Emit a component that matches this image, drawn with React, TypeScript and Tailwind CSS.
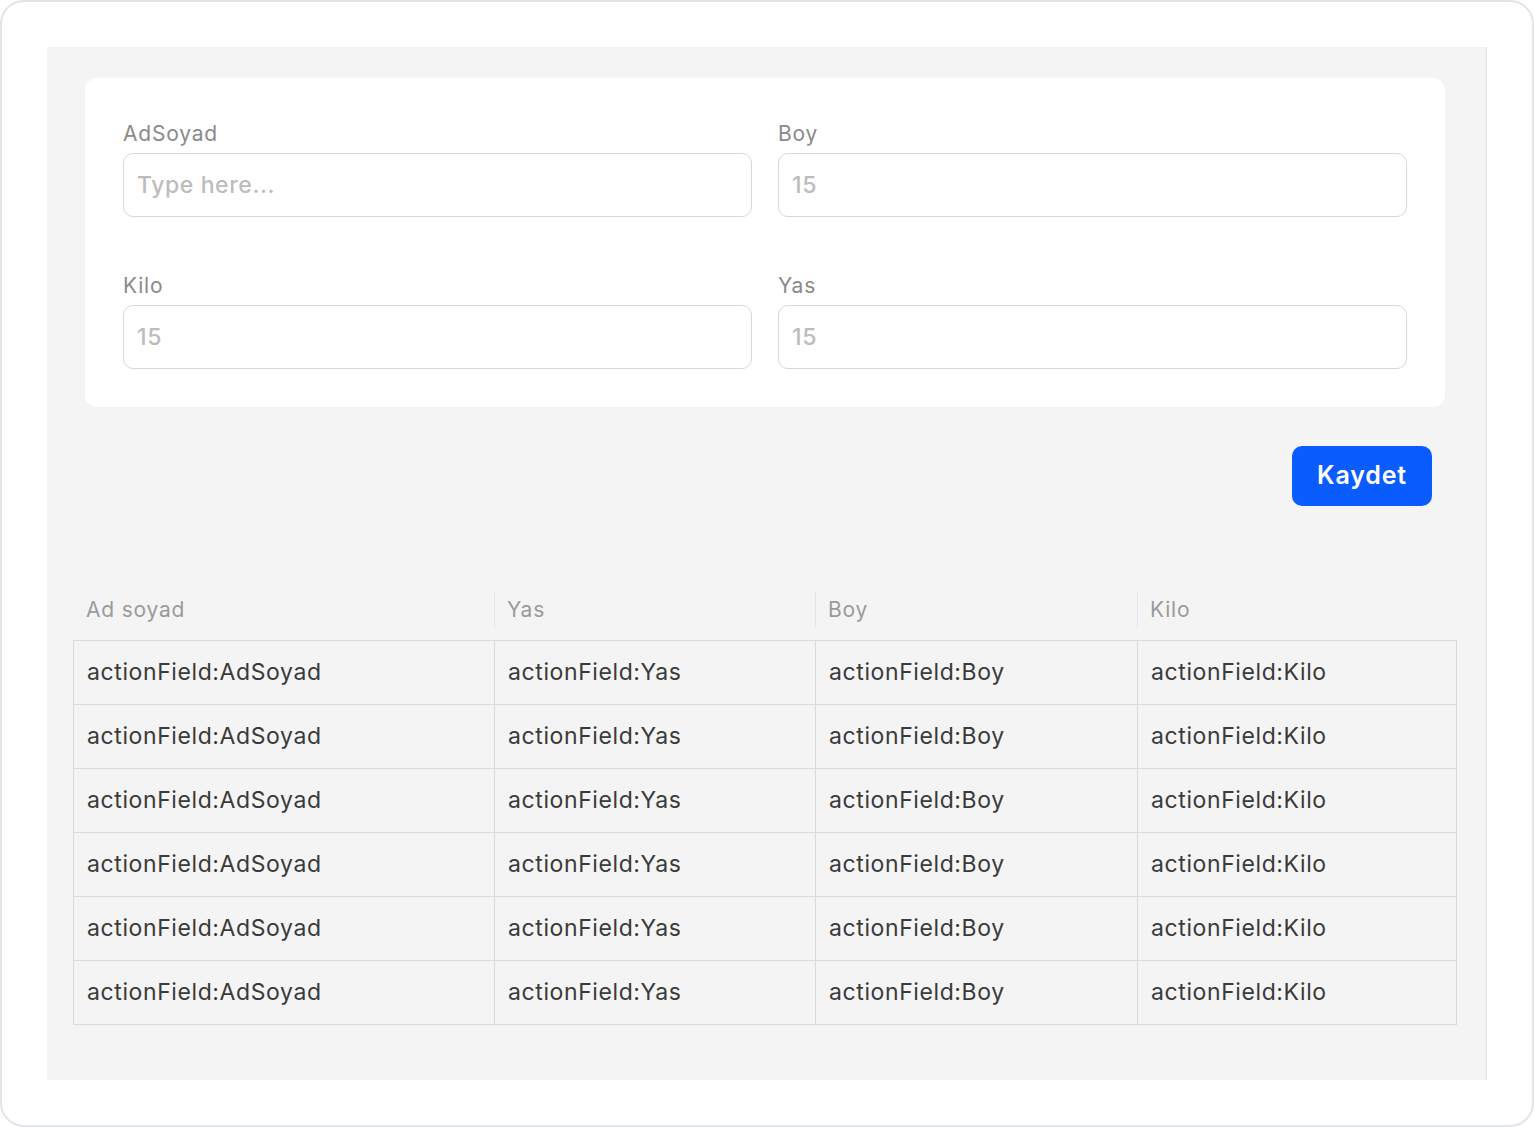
import React from "react";

const rows = Array.from({ length: 6 });

function Field({ label, placeholder }: { label: string; placeholder: string }) {
  return (
    <div className="flex flex-col">
      <label className="text-[21px] leading-[28px] tracking-[0.8px] text-[#8a8a8a] mb-[5px]">{label}</label>
      <input
        placeholder={placeholder}
        className="h-[64px] w-full rounded-[10px] border border-[#d8d8d8] bg-white px-[13px] text-[23px] font-medium tracking-[0.6px] text-[#333] placeholder:text-[#bcbcbc] outline-none"
      />
    </div>
  );
}

export default function App() {
  return (
    <div
      className="w-[1534px] h-[1127px] bg-white"
      style={{ fontFamily: "Inter, 'Noto Sans', sans-serif" }}
    >
      <div className="w-full h-full rounded-[24px] border-2 border-[#e2e4e8] pt-[45px] pl-[45px]">
        <div className="w-[1440px] h-[1033px] bg-[#f4f4f4] border-r border-[#dfe1e4] pt-[31px] pl-[26px] pr-[29px]">
          <div className="mx-[12px] rounded-[12px] bg-white pl-[38px] pr-[38px] pt-[42px] pb-[38px]">
            <div className="grid grid-cols-2 gap-x-[26px] gap-y-[55px]">
              <Field label="AdSoyad" placeholder="Type here..." />
              <Field label="Boy" placeholder="15" />
              <Field label="Kilo" placeholder="15" />
              <Field label="Yas" placeholder="15" />
            </div>
          </div>
          <div className="flex justify-end mt-[39px] pr-[25px]">
            <button className="w-[140px] h-[60px] rounded-[10px] bg-[#0a5cff] text-white text-[25px] tracking-[0.8px] font-semibold">
              Kaydet
            </button>
          </div>
          <div className="mt-[74px]">
            <div className="grid grid-cols-[421px_321px_322px_1fr] h-[60px] text-[21px] tracking-[0.8px] text-[#9a9a9a]">
              {["Ad soyad", "Yas", "Boy", "Kilo"].map((h, i) => (
                <div key={h} className="flex items-center">
                  {i > 0 && <span className="h-[36px] w-px bg-[#e6e6e6]" />}
                  <span className={i > 0 ? "pl-[12px]" : "pl-[13px]"}>{h}</span>
                </div>
              ))}
            </div>
            <div className="border border-[#dadada]">
              {rows.map((_, r) => (
                <div
                  key={r}
                  className={`grid grid-cols-[420px_321px_322px_1fr] text-[23px] tracking-[0.6px] text-[#3a3a3a] ${r > 0 ? "h-[64px] border-t border-[#dadada]" : "h-[63px]"}`}
                >
                  {["actionField:AdSoyad", "actionField:Yas", "actionField:Boy", "actionField:Kilo"].map((c, i) => (
                    <div
                      key={c}
                      className={`flex items-center pl-[13px] ${i > 0 ? "border-l border-[#dadada]" : ""}`}
                    >
                      {c}
                    </div>
                  ))}
                </div>
              ))}
            </div>
          </div>
        </div>
      </div>
    </div>
  );
}
